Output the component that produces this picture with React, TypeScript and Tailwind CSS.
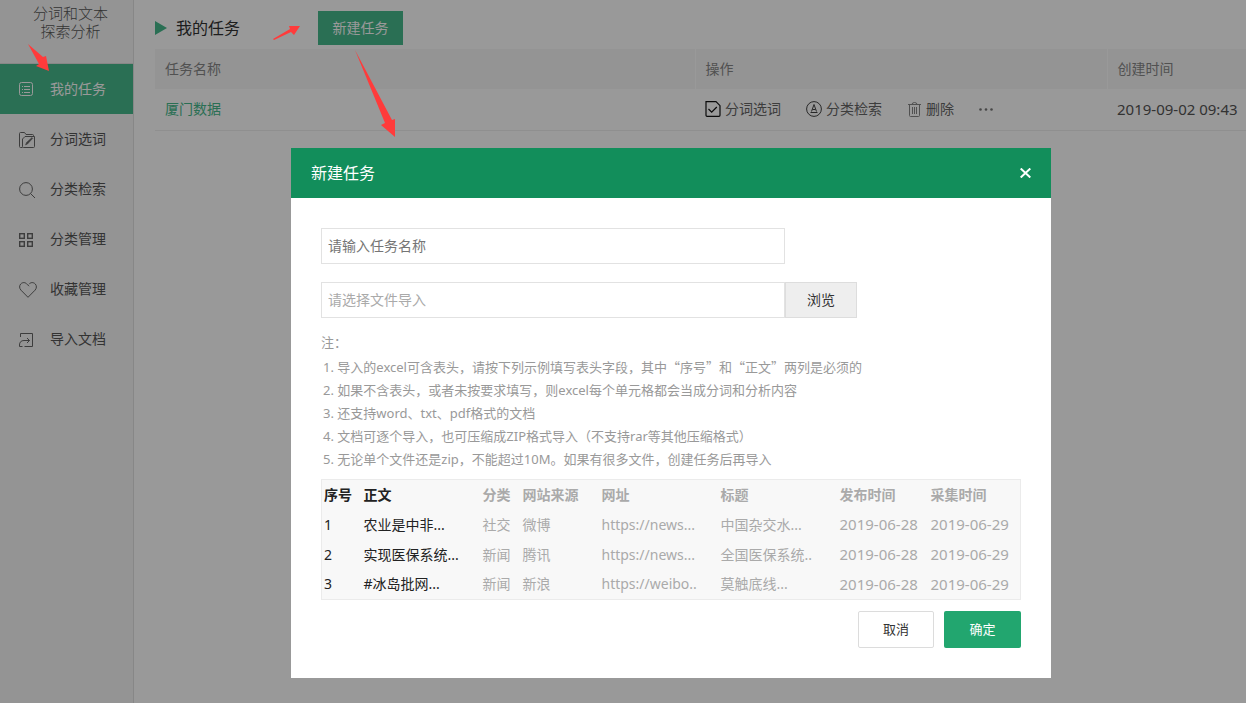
import React, { useState } from 'react';

const FONT = 'font-["Noto_Sans","Noto_Sans_CJK_SC",sans-serif]';

const icons = {
  list: (
    <svg width="14" height="14" viewBox="0 0 14 14" fill="none" stroke="currentColor">
      <rect x="0.5" y="0.5" width="13" height="13" rx="2" />
      <path d="M3 4.5h1M3 7.5h1M3 10.5h1M5 4.5h6M5 7.5h6M5 10.5h6" />
    </svg>
  ),
  folder: (
    <svg width="17" height="17" viewBox="0 0 17 17" fill="none" stroke="currentColor">
      <path d="M3.5 15.5h-2a1 1 0 0 1-1-1v-13a1 1 0 0 1 1-1h4l1.5 2h6.5a1 1 0 0 1 1 1v1" />
      <path d="M6 4.500h9.500v10a1 1 0 0 1-1 1h-10a1 1 0 0 1-1-1V7z" />
      <path d="M6.500 13l1-2.500 5.500-5 .8.8-5.300 5.700z" fill="currentColor" strokeWidth="0.5" />
    </svg>
  ),
  search: (
    <svg width="17" height="17" viewBox="0 0 17 17" fill="none" stroke="currentColor">
      <circle cx="7" cy="7" r="6.400" />
      <path d="M11.500 11.500L16 16" />
    </svg>
  ),
  grid: (
    <svg width="14" height="14" viewBox="0 0 14 14" fill="none" stroke="currentColor" strokeWidth="1.400">
      <rect x="0.700" y="0.700" width="4.600" height="4.600" />
      <rect x="8.700" y="0.700" width="4.600" height="4.600" />
      <rect x="0.700" y="8.700" width="4.600" height="4.600" />
      <rect x="8.700" y="8.700" width="4.600" height="4.600" />
    </svg>
  ),
  heart: (
    <svg width="18" height="16" viewBox="0 0 18 16" fill="none" stroke="currentColor">
      <path d="M9 15.300L2 8.200C.2 6.300.2 3.700 1.700 2 3.600 0 6.400.2 8 2.200l2 2M9 15.300l7-7.100c1.800-1.900 1.800-4.500.3-6.200C14.400 0 11.600.2 10 2.200" />
    </svg>
  ),
  share: (
    <svg width="14" height="14" viewBox="0 0 14 14" fill="none" stroke="currentColor">
      <path d="M1.500 4V.5h12v13H5.500" />
      <path d="M3.500 13.500h-3V12c0-2.800 1.600-4.500 4.500-4.500h5.500M8 5l2.500 2.500L8 10" />
    </svg>
  ),
  docCheck: (
    <svg width="16" height="16" viewBox="0 0 16 16" fill="none" stroke="#111" strokeWidth="1.200">
      <path d="M1 .7h10l4 4v9.600a1 1 0 0 1-1 1H2a1 1 0 0 1-1-1z" />
      <path d="M3.500 8l3.200 3.200L11.800 6" />
    </svg>
  ),
  circleA: (
    <svg width="16" height="16" viewBox="0 0 16 16" fill="none" stroke="#444">
      <circle cx="8" cy="8" r="7.400" />
      <path d="M5.500 10.500L8 3.500l2.500 7M6.500 8.500h3M4.500 11.500h7" />
    </svg>
  ),
  trash: (
    <svg width="15" height="15" viewBox="0 0 15 15" fill="none" stroke="#888">
      <path d="M1 2.500h13M5 2.500a2.500 2 0 0 1 5 0M2.500 2.500v11a1 1 0 0 0 1 1h8a1 1 0 0 0 1-1v-11M5.500 5v7M7.500 5v7M9.500 5v7" />
    </svg>
  ),
};

const menu = [
  { label: '我的任务', icon: icons.list },
  { label: '分词选词', icon: icons.folder },
  { label: '分类检索', icon: icons.search },
  { label: '分类管理', icon: icons.grid },
  { label: '收藏管理', icon: icons.heart },
  { label: '导入文档', icon: icons.share },
];

const notes = [
  '导入的excel可含表头，请按下列示例填写表头字段，其中“序号”和“正文”两列是必须的',
  '如果不含表头，或者未按要求填写，则excel每个单元格都会当成分词和分析内容',
  '还支持word、txt、pdf格式的文档',
  '文档可逐个导入，也可压缩成ZIP格式导入（不支持rar等其他压缩格式）',
  '无论单个文件还是zip，不能超过10M。如果有很多文件，创建任务后再导入',
];

const columns = ['序号', '正文', '分类', '网站来源', '网址', '标题', '发布时间', '采集时间'];

const samples = [
  ['1', '农业是中非...', '社交', '微博', 'https://news...', '中国杂交水...', '2019-06-28', '2019-06-29'],
  ['2', '实现医保系统...', '新闻', '腾讯', 'https://news...', '全国医保系统..', '2019-06-28', '2019-06-29'],
  ['3', '#冰岛批网...', '新闻', '新浪', 'https://weibo..', '莫触底线...', '2019-06-28', '2019-06-29'],
];

// quoted words use the CJK font so the quotes come out full width
const renderNote = (note: string) =>
  note.split(/(“[^”]*”)/).map((part, i) =>
    part.startsWith('“') ? (
      <span key={i} className='font-["Noto_Sans_CJK_SC",sans-serif]'>{part}</span>
    ) : (
      part
    )
  );

const Sidebar: React.FC = () => (
  <aside className="w-[134px] shrink-0 bg-[#f7f7f7] border-r border-[#e2e2e2]">
    <div className="h-16 pt-1 pl-2 text-center text-[15px] leading-[18px] text-[#555] font-light border-b border-[#e2e2e2]">
      分词和文本
      <br />
      探索分析
    </div>
    <nav>
      {menu.map((item, i) => (
        <a
          key={item.label}
          href="#"
          className={`flex items-center h-[50px] pl-[19px] text-sm ${i === 0 ? 'bg-[#46b98c] text-white' : 'text-[#555]'}`}
        >
          <span className={`w-[31px] ${i === 0 ? 'text-white' : 'pt-0.5 text-[#666]'}`}>{item.icon}</span>
          {item.label}
        </a>
      ))}
    </nav>
  </aside>
);

const TaskList: React.FC<{ onCreate: () => void }> = ({ onCreate }) => (
  <main className="flex-1 min-w-0 pl-[21px]">
    <div className="flex items-center h-[49px] pt-1.5">
      <svg width="12" height="14" viewBox="0 0 12 14" fill="#46b98c">
        <path d="M0 0l12 7-12 7z" />
      </svg>
      <h1 className="ml-[9px] text-base text-[#333]">我的任务</h1>
      <button onClick={onCreate} className="ml-[78px] w-[85px] h-[34px] bg-[#46b98c] text-white text-sm">
        新建任务
      </button>
    </div>
    <table className="w-full table-fixed text-left text-sm">
      <thead>
        <tr className="h-10 bg-[#f7f7f7] text-[#888]">
          <th className="w-[540px] px-2.5 font-normal border-r border-white">任务名称</th>
          <th className="px-2.5 font-normal border-r border-white">操作</th>
          <th className="w-[139px] px-2.5 font-normal">创建时间</th>
        </tr>
      </thead>
      <tbody>
        <tr className="h-[41px] border-b border-[#eee] text-[#666]">
          <td className="px-2.5">
            <a href="#" className="text-[#46b98c]">厦门数据</a>
          </td>
          <td className="px-2.5">
            <div className="flex items-center gap-[25px]">
              <button className="flex items-center gap-1">{icons.docCheck}分词选词</button>
              <button className="flex items-center gap-1">{icons.circleA}分类检索</button>
              <button className="flex items-center gap-1">{icons.trash}删除</button>
              <button aria-label="更多">
                <svg width="14" height="3" viewBox="0 0 14 3" fill="#777">
                  <circle cx="1.500" cy="1.500" r="1.300" />
                  <circle cx="7" cy="1.500" r="1.300" />
                  <circle cx="12.500" cy="1.500" r="1.300" />
                </svg>
              </button>
            </div>
          </td>
          <td className="pl-2.5 text-[15px] text-[#555] whitespace-nowrap">2019-09-02 09:43</td>
        </tr>
      </tbody>
    </table>
  </main>
);

const CreateTaskModal: React.FC<{ onClose: () => void }> = ({ onClose }) => {
  const [name, setName] = useState('');

  return (
    <div role="dialog" aria-label="新建任务" className="w-[760px] max-w-full bg-white">
      <div className="flex items-center justify-between h-[50px] px-5 bg-[#128e5b] text-white">
        <h2 className="text-base">新建任务</h2>
        <button onClick={onClose} aria-label="关闭">
          <svg width="11" height="10" viewBox="0 0 11 10" fill="none" stroke="currentColor" strokeWidth="2">
            <path d="M.7.5l9.600 9M10.300.5L.7 9.500" />
          </svg>
        </button>
      </div>
      <form className="p-[30px]" onSubmit={e => e.preventDefault()}>
        <input
          type="text"
          aria-label="任务名称"
          value={name}
          onChange={e => setName(e.target.value)}
          placeholder="请输入任务名称"
          className="block w-[464px] h-9 px-1.5 pb-0.5 border border-[#e2e2e2] text-sm placeholder:text-[#757575]"
        />
        <div className="flex mt-[18px]">
          <input
            type="text"
            readOnly
            aria-label="文件"
            placeholder="请选择文件导入"
            className="w-[464px] h-9 px-1.5 pb-0.5 border border-[#e2e2e2] text-sm placeholder:text-[#aaa]"
          />
          <button type="button" className="w-[72px] h-9 bg-[#eee] border border-[#ddd] text-sm text-[#333]">
            浏览
          </button>
        </div>
        <div className="mt-[13px] text-[13px] leading-[23px] text-[#999]">
          <p>注：</p>
          <ol className="mt-px pl-0.5">
            {notes.map((note, i) => (
              <li key={note}>{i + 1}. {renderNote(note)}</li>
            ))}
          </ol>
        </div>
        <table className="w-full table-fixed mt-2 bg-[#f8f8f8] border border-[#ebebeb] text-left text-sm text-[#aaa]">
          <colgroup>
            <col className="w-10" />
            <col className="w-[119px]" />
            <col className="w-10" />
            <col className="w-[79px]" />
            <col className="w-[119px]" />
            <col className="w-[119px]" />
            <col className="w-[91px]" />
            <col />
          </colgroup>
          <thead>
            <tr className="h-[30px]">
              {columns.map((col, i) => (
                <th key={col} className={`pl-0.5 font-bold ${i < 2 ? 'text-[#222]' : ''}`}>{col}</th>
              ))}
            </tr>
          </thead>
          <tbody>
            {samples.map(row => (
              <tr key={row[0]} className="h-[30px]">
                {row.map((cell, i) => (
                  <td
                    key={i}
                    className={`pl-0.5 whitespace-nowrap ${i < 2 ? 'text-[#222]' : ''} ${i > 5 ? 'text-[15px]' : ''}`}
                  >
                    {cell}
                  </td>
                ))}
              </tr>
            ))}
          </tbody>
        </table>
        <div className="flex justify-end gap-2.5 mt-[11px] text-[13px]">
          <button type="button" onClick={onClose} className="w-[76px] h-[37px] border border-[#dcdcdc] rounded-xs text-[#333]">
            取消
          </button>
          <button type="submit" className="w-[77px] h-[37px] bg-[#22a66f] rounded-xs text-white">
            确定
          </button>
        </div>
      </form>
    </div>
  );
};

// red guide arrows drawn above everything
const Arrows: React.FC = () => (
  <svg className="absolute top-0 left-0 pointer-events-none" width="420" height="140" viewBox="0 0 420 140" fill="#ff3b3b">
    <path d="M28 44L43 57 46 56 49 71 36 66 39 64z" />
    <path d="M273 39L290 29 289 26 300 26 294 35 291 32 274 40z" />
    <path d="M355 50L392 120 395 119 395 137 381 125 385 123z" />
  </svg>
);

const App: React.FC = () => {
  const [open, setOpen] = useState(true);

  return (
    <div className={`relative min-h-screen flex bg-white ${FONT}`}>
      <Sidebar />
      <TaskList onCreate={() => setOpen(true)} />
      {open && (
        <div className="absolute inset-0 flex items-start justify-center pt-[148px] pl-24 bg-black/40">
          <CreateTaskModal onClose={() => setOpen(false)} />
        </div>
      )}
      <Arrows />
    </div>
  );
};

export default App;
